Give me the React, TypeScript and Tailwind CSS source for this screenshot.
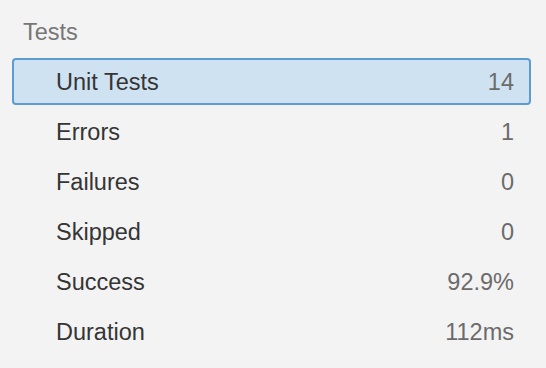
import React from "react";

interface StatRow {
  label: string;
  value: string;
  selected?: boolean;
}

const rows: StatRow[] = [
  { label: "Unit Tests", value: "14", selected: true },
  { label: "Errors", value: "1" },
  { label: "Failures", value: "0" },
  { label: "Skipped", value: "0" },
  { label: "Success", value: "92.9%" },
  { label: "Duration", value: "112ms" },
];

const App: React.FC = () => {
  return (
    <div
      className="min-h-[368px] w-[546px] bg-[#f3f3f3] pl-3 pr-[15px] pt-[19px]"
      style={{ fontFamily: '"Liberation Sans", Arial, sans-serif' }}
    >
      <h2 className="pl-[11px] text-[23.5px] leading-[26px] font-normal text-[#767676]">Tests</h2>
      <ul className="mt-[13px] flex flex-col gap-[3px]">
        {rows.map((row) => (
          <li
            key={row.label}
            className={
              row.selected
                ? "flex h-[47px] items-center justify-between rounded-[4px] border-2 border-[#5e9bd2] bg-[#cfe2f1] pl-[42px] pr-[15px] text-[23.5px] leading-[26px]"
                : "flex h-[47px] items-center justify-between rounded-[4px] border-2 border-transparent pl-[42px] pr-[15px] text-[23.5px] leading-[26px]"
            }
          >
            <span className="text-[#353535]">{row.label}</span>
            <span className="text-[#6b6b6b]">{row.value}</span>
          </li>
        ))}
      </ul>
    </div>
  );
};

export default App;
